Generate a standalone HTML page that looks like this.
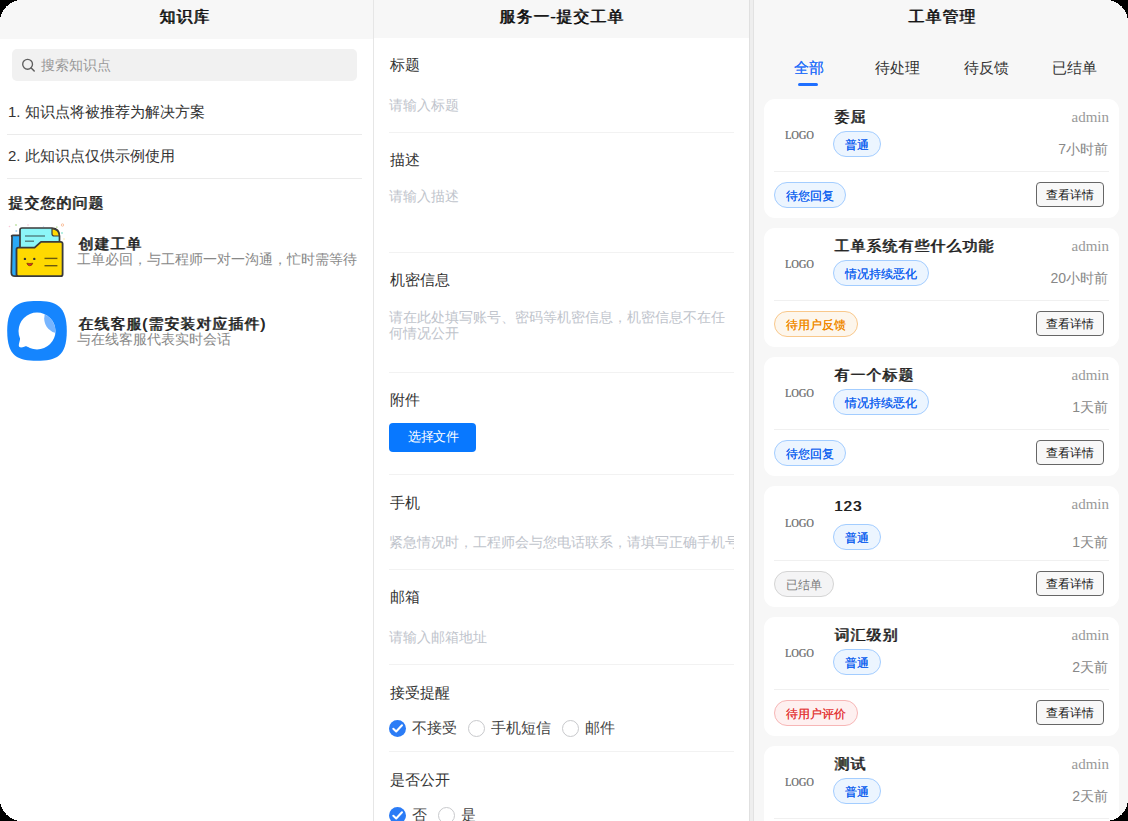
<!DOCTYPE html>
<html><head><meta charset="utf-8">
<style>
html,body{margin:0;padding:0;width:1128px;height:821px;overflow:hidden;background:#000;}
*{box-sizing:border-box;}
#app{position:absolute;left:0;top:0;width:1128px;height:821px;overflow:hidden;background:#fff;font-family:"Liberation Sans",sans-serif;color:#333;}
.a{position:absolute;white-space:nowrap;line-height:1;}
.hdr{position:absolute;top:0;height:38px;background:#f7f7f7;}
.ttl{font-size:16px;font-weight:normal;text-shadow:0.8px 0 0 #111;color:#111;letter-spacing:1px;}
.vline{position:absolute;top:0;height:821px;width:1px;}
.dv{position:absolute;height:1px;background:#ebebeb;}
.dvm{position:absolute;height:1px;background:#f2f2f2;}
.lab{font-size:15px;color:#333;}
.ph{font-size:14px;color:#c0c4cc;}
.card{position:absolute;left:764px;width:355px;height:119px;background:#fff;border-radius:11px;}
.logo{position:absolute;left:21px;top:30px;font-family:"Liberation Serif",serif;font-size:12px;transform:scaleX(0.86);transform-origin:0 0;color:#7c7c7c;text-shadow:0.3px 0 0 #7c7c7c;line-height:1;}
.ct{position:absolute;left:70px;top:10px;font-size:15px;font-weight:normal;text-shadow:0.7px 0 0 #222;letter-spacing:1px;color:#222;line-height:1;white-space:nowrap;}
.tag{position:absolute;height:26px;border-radius:13px;font-size:12px;line-height:26px;text-align:center;white-space:nowrap;}
.tb{border:1px solid #a3cdff;background:#ecf5ff;color:#1263ef;text-shadow:0.3px 0 0 #1263ef;}
.to{border:1px solid #f9c88b;background:#fdf6ec;color:#f08a00;text-shadow:0.3px 0 0 #f08a00;}
.tr{border:1px solid #f7b6b6;background:#fef0f0;color:#e43c3c;text-shadow:0.3px 0 0 #e43c3c;}
.tg{border:1px solid #d4d4d4;background:#f4f4f5;color:#7a7a7a;}
.adm{position:absolute;right:10px;top:11px;font-family:"Liberation Serif",serif;font-size:15px;color:#999;line-height:1;}
.tm{position:absolute;right:11px;top:43px;font-size:14px;color:#888;line-height:1;white-space:nowrap;}
.cdv{position:absolute;left:10px;right:10px;top:72px;height:1px;background:#f0f0f0;}
.btn{position:absolute;right:15px;top:83px;width:68px;height:25px;border:1px solid #666;border-radius:4px;background:#f8f8f8;font-size:12px;line-height:24px;text-align:center;color:#111;}
.radio{position:absolute;width:17px;height:17px;border-radius:50%;border:1px solid #c8c9cc;background:#fff;}
.radio.on{border:none;background:#2b7cf6;}
</style></head><body>
<div id="app">
  <!-- LEFT PANEL -->
  <div class="hdr" style="left:0;width:373px;height:39px;"></div>
  <div class="a ttl" style="left:159px;top:9px;">知识库</div>
  <div class="vline" style="left:373px;background:#e6e6e6;"></div>
  <div style="position:absolute;left:12px;top:49px;width:345px;height:32px;border-radius:5px;background:#f1f1f1;"></div>
  <svg style="position:absolute;left:21px;top:58px;" width="15" height="15" viewBox="0 0 15 15"><circle cx="6.6" cy="6.3" r="4.9" fill="none" stroke="#5f5f5f" stroke-width="1.35"/><line x1="10.2" y1="10" x2="13.2" y2="13" stroke="#5f5f5f" stroke-width="1.5" stroke-linecap="round"/></svg>
  <div class="a" style="left:41px;top:58px;font-size:14px;color:#999;">搜索知识点</div>
  <div class="a" style="left:8px;top:104px;font-size:15px;color:#333;">1. 知识点将被推荐为解决方案</div>
  <div class="dv" style="left:7px;top:134px;width:355px;"></div>
  <div class="a" style="left:8px;top:148px;font-size:15px;color:#333;">2. 此知识点仅供示例使用</div>
  <div class="dv" style="left:7px;top:178px;width:355px;"></div>
  <div class="a" style="left:8px;top:195px;font-size:15px;font-weight:normal;text-shadow:0.7px 0 0 #222;color:#222;letter-spacing:1px;">提交您的问题</div>
  <!-- folder icon -->
  <svg style="position:absolute;left:6px;top:220px;" width="64" height="62" viewBox="0 0 64 62">
    <circle cx="10" cy="5" r="1.1" fill="#c8e6b0"/><circle cx="22" cy="5" r="0.8" fill="#f6c9d6"/><circle cx="3.5" cy="6.5" r="0.8" fill="#f6c9d6"/><circle cx="10.3" cy="11" r="1" fill="#a9d4f5"/><circle cx="56.5" cy="5" r="1.2" fill="none" stroke="#f7b48a" stroke-width="0.8"/><circle cx="50.8" cy="7.2" r="0.9" fill="#c8e6b0"/><circle cx="56" cy="13" r="1" fill="#9fe8d8"/><circle cx="58" cy="19" r="0.8" fill="#fbe7a8"/><circle cx="37.5" cy="6.5" r="0.7" fill="#cde3f7"/>
    <path d="M6 17 Q5 15.3 7 15.3 L16 15.3 L16 56.2 L9 56.2 Q5.3 56.2 5.3 52.5 Z" fill="#2aa9f6" stroke="#3b3b3b" stroke-width="1.7"/>
    <path d="M14 10 Q14 8 16 8 L46 8 Q53.5 8.5 53.5 16 L53.5 30 L14 30 Z" fill="#8cf6f8" stroke="#3b3b3b" stroke-width="1.7" stroke-linejoin="round"/>
    <path d="M46 8.6 L46 13.8 Q46 16 48.2 16 L53.3 16 Q53 9.2 46 8.6 Z" fill="#ffd800" stroke="#3b3b3b" stroke-width="1.2" stroke-linejoin="round"/>
    <line x1="19" y1="16" x2="39" y2="16" stroke="#4c7676" stroke-width="1.3"/>
    <line x1="19" y1="21.2" x2="28" y2="21.2" stroke="#4c7676" stroke-width="1.3"/>
    <path d="M10.5 29.5 Q10.5 27.6 12.5 27.6 L28.6 27.6 L35 21.8 L54.6 21.8 Q56.6 21.8 56.6 23.8 L56.6 54.2 Q56.6 56.2 54.6 56.2 L12.5 56.2 Q10.5 56.2 10.5 54.2 Z" fill="#ffd900" stroke="#3b3b3b" stroke-width="1.8" stroke-linejoin="round"/>
    <circle cx="18.9" cy="38.9" r="1.2" fill="#333"/><circle cx="28.3" cy="38.9" r="1.2" fill="#333"/>
    <path d="M20.8 43.2 Q23.8 43.8 26.8 43.2 Q26 45.8 23.8 45.8 Q21.6 45.8 20.8 43.2 Z" fill="#e8262c" stroke="#5a2a00" stroke-width="0.6"/>
    <line x1="38.5" y1="38.4" x2="51.4" y2="38.4" stroke="#6b5a10" stroke-width="1.4"/>
    <line x1="38.5" y1="45.7" x2="51.4" y2="45.7" stroke="#6b5a10" stroke-width="1.4"/>
  </svg>
  <div class="a" style="left:78px;top:236px;font-size:15px;font-weight:normal;text-shadow:0.7px 0 0 #222;color:#222;letter-spacing:1px;">创建工单</div>
  <div class="a" style="left:77px;top:252px;font-size:14px;color:#888;">工单必回，与工程师一对一沟通，忙时需等待</div>
  <!-- chat icon -->
  <svg style="position:absolute;left:4px;top:298px;" width="66" height="66" viewBox="0 0 66 66">
    <path d="M33 2.9 C52 2.9 62.8 7.5 62.8 33 C62.8 58.5 52 62.8 33 62.8 C14 62.8 3.2 58.5 3.2 33 C3.2 7.5 14 2.9 33 2.9 Z" fill="#1585fe"/>
    <defs><clipPath id="cc"><circle cx="33" cy="33" r="18.5"/></clipPath></defs>
    <circle cx="33" cy="33" r="18.5" fill="#fff"/>
    <path d="M16.2 39 C16.2 43 14.6 45.5 14.8 47.8 C15 49.8 17.6 49.7 20.3 48.7 C23.2 47.7 25.2 48.8 28.5 50.6 L24 40 Z" fill="#fff"/>
    <circle cx="55" cy="20.5" r="14.8" fill="#77b5ff" clip-path="url(#cc)"/>
  </svg>
  <div class="a" style="left:78px;top:316px;font-size:15px;font-weight:normal;text-shadow:0.7px 0 0 #222;color:#222;letter-spacing:1px;">在线客服(需安装对应插件)</div>
  <div class="a" style="left:77px;top:332px;font-size:14px;color:#888;">与在线客服代表实时会话</div>

  <!-- MIDDLE PANEL -->
  <div class="hdr" style="left:374px;width:375px;"></div>
  <div class="a ttl" style="left:499px;top:9px;">服务一-提交工单</div>
  <div class="vline" style="left:749px;background:#e0e0e0;"></div>
  <div style="position:absolute;left:750px;top:0;width:3px;height:821px;background:#eeeeee;"></div>
  <div class="vline" style="left:753px;background:#e2e2e2;"></div>

  <div class="a lab" style="left:390px;top:57px;">标题</div>
  <div class="a ph" style="left:389px;top:98px;">请输入标题</div>
  <div class="dvm" style="left:389px;top:132px;width:345px;"></div>
  <div class="a lab" style="left:390px;top:152px;">描述</div>
  <div class="a ph" style="left:389px;top:189px;">请输入描述</div>
  <div class="dvm" style="left:389px;top:252px;width:345px;"></div>
  <div class="a lab" style="left:390px;top:272px;">机密信息</div>
  <div class="a ph" style="left:389px;top:309px;line-height:16px;">请在此处填写账号、密码等机密信息，机密信息不在任<br>何情况公开</div>
  <div class="dvm" style="left:389px;top:372px;width:345px;"></div>
  <div class="a lab" style="left:390px;top:392px;">附件</div>
  <div style="position:absolute;left:389px;top:423px;width:87px;height:29px;border-radius:4px;background:#0878ff;"></div>
  <div class="a" style="left:408px;top:430px;font-size:13px;letter-spacing:-0.5px;color:#fff;">选择文件</div>
  <div class="dvm" style="left:389px;top:474px;width:345px;"></div>
  <div class="a lab" style="left:390px;top:495px;">手机</div>
  <div style="position:absolute;left:389px;top:530px;width:345px;height:24px;overflow:hidden;"><div class="a ph" style="left:0;top:5px;">紧急情况时，工程师会与您电话联系，请填写正确手机号码</div></div>
  <div class="dvm" style="left:389px;top:569px;width:345px;"></div>
  <div class="a lab" style="left:390px;top:589px;">邮箱</div>
  <div class="a ph" style="left:389px;top:630px;">请输入邮箱地址</div>
  <div class="dvm" style="left:389px;top:664px;width:345px;"></div>
  <div class="a lab" style="left:390px;top:685px;">接受提醒</div>
  <div class="radio on" style="left:389px;top:720px;"><svg width="17" height="17" viewBox="0 0 17 17" style="position:absolute;left:0;top:0"><path d="M4.3 8.7 L7.2 11.5 L13 5.2" fill="none" stroke="#fff" stroke-width="2" stroke-linecap="round" stroke-linejoin="round"/></svg></div>
  <div class="a lab" style="left:412px;top:720px;color:#444;">不接受</div>
  <div class="radio" style="left:468px;top:720px;"></div>
  <div class="a lab" style="left:491px;top:720px;color:#444;">手机短信</div>
  <div class="radio" style="left:562px;top:720px;"></div>
  <div class="a lab" style="left:585px;top:720px;color:#444;">邮件</div>
  <div class="dvm" style="left:389px;top:751px;width:345px;"></div>
  <div class="a lab" style="left:390px;top:772px;">是否公开</div>
  <div class="radio on" style="left:389px;top:807px;"><svg width="17" height="17" viewBox="0 0 17 17" style="position:absolute;left:0;top:0"><path d="M4.3 8.7 L7.2 11.5 L13 5.2" fill="none" stroke="#fff" stroke-width="2" stroke-linecap="round" stroke-linejoin="round"/></svg></div>
  <div class="a lab" style="left:412px;top:807px;color:#444;">否</div>
  <div class="radio" style="left:438px;top:807px;"></div>
  <div class="a lab" style="left:461px;top:807px;color:#444;">是</div>

  <!-- RIGHT PANEL -->
  <div style="position:absolute;left:754px;top:0;width:374px;height:821px;background:#f7f7f7;"></div>
  <div class="a ttl" style="left:908px;top:9px;">工单管理</div>
  <div class="a" style="left:794px;top:60px;font-size:15px;color:#2a72fa;text-shadow:0.35px 0 0 #2a72fa;">全部</div>
  <div style="position:absolute;left:798px;top:83px;width:20px;height:3px;border-radius:2px;background:#1f6fff;"></div>
  <div class="a" style="left:875px;top:60px;font-size:15px;color:#333;">待处理</div>
  <div class="a" style="left:964px;top:60px;font-size:15px;color:#333;">待反馈</div>
  <div class="a" style="left:1052px;top:60px;font-size:15px;color:#333;">已结单</div>
  <div class="card" style="top:99px;height:119px;">
    <div class="logo" style="top:30px;">LOGO</div>
    <div class="ct">委屈</div>
    <div class="tag tb" style="left:69px;top:32px;width:48px;">普通</div>
    <div class="adm">admin</div>
    <div class="tm" style="top:43px;">7小时前</div>
    <div class="cdv" style="top:72px;"></div>
    <div class="tag tb" style="left:10px;top:83px;width:72px;">待您回复</div>
    <div class="btn" style="top:83px;">查看详情</div>
  </div>
  <div class="card" style="top:228px;height:119px;">
    <div class="logo" style="top:30px;">LOGO</div>
    <div class="ct">工单系统有些什么功能</div>
    <div class="tag tb" style="left:69px;top:32px;width:96px;">情况持续恶化</div>
    <div class="adm">admin</div>
    <div class="tm" style="top:43px;">20小时前</div>
    <div class="cdv" style="top:72px;"></div>
    <div class="tag to" style="left:10px;top:83px;width:84px;">待用户反馈</div>
    <div class="btn" style="top:83px;">查看详情</div>
  </div>
  <div class="card" style="top:357px;height:119px;">
    <div class="logo" style="top:30px;">LOGO</div>
    <div class="ct">有一个标题</div>
    <div class="tag tb" style="left:69px;top:32px;width:96px;">情况持续恶化</div>
    <div class="adm">admin</div>
    <div class="tm" style="top:43px;">1天前</div>
    <div class="cdv" style="top:72px;"></div>
    <div class="tag tb" style="left:10px;top:83px;width:72px;">待您回复</div>
    <div class="btn" style="top:83px;">查看详情</div>
  </div>
  <div class="card" style="top:486px;height:121px;">
    <div class="logo" style="top:31px;">LOGO</div>
    <div class="ct" style="top:12px;">123</div>
    <div class="tag tb" style="left:69px;top:38px;width:48px;">普通</div>
    <div class="adm">admin</div>
    <div class="tm" style="top:49px;">1天前</div>
    <div class="cdv" style="top:74px;"></div>
    <div class="tag tg" style="left:10px;top:85px;width:60px;">已结单</div>
    <div class="btn" style="top:85px;">查看详情</div>
  </div>
  <div class="card" style="top:617px;height:119px;">
    <div class="logo" style="top:30px;">LOGO</div>
    <div class="ct">词汇级别</div>
    <div class="tag tb" style="left:69px;top:32px;width:48px;">普通</div>
    <div class="adm">admin</div>
    <div class="tm" style="top:43px;">2天前</div>
    <div class="cdv" style="top:72px;"></div>
    <div class="tag tr" style="left:10px;top:83px;width:84px;">待用户评价</div>
    <div class="btn" style="top:83px;">查看详情</div>
  </div>
  <div class="card" style="top:746px;height:119px;">
    <div class="logo" style="top:30px;">LOGO</div>
    <div class="ct">测试</div>
    <div class="tag tb" style="left:69px;top:32px;width:48px;">普通</div>
    <div class="adm">admin</div>
    <div class="tm" style="top:43px;">2天前</div>
    <div class="cdv" style="top:72px;"></div>
    <div class="tag tb" style="left:10px;top:83px;width:72px;">待您回复</div>
    <div class="btn" style="top:83px;">查看详情</div>
  </div>
  <svg style="position:absolute;left:0;top:0;z-index:10" width="1128" height="821" viewBox="0 0 1128 821" shape-rendering="crispEdges">
    <path d="M0 0 H22 A22 22 0 0 0 0 22 Z" fill="#000"/>
    <path d="M1128 0 H1106 A22 22 0 0 1 1128 22 Z" fill="#000"/>
    <path d="M0 821 H22 A22 22 0 0 1 0 799 Z" fill="#000"/>
    <path d="M1128 821 H1106 A22 22 0 0 0 1128 799 Z" fill="#000"/>
  </svg>
</div>
</body></html>
